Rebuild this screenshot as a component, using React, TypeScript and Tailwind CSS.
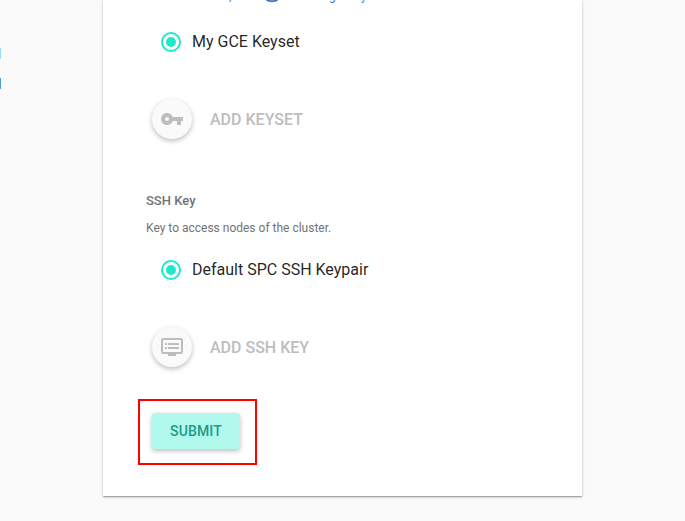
import { MdVpnKey, MdDvr } from "react-icons/md";
import type { ReactNode } from "react";

function Radio({ label }: { label: string }) {
  return (
    <label className="flex h-6 items-center gap-[11px] pl-[15px] text-[16px] text-black/87">
      <span className="flex size-5 items-center justify-center rounded-full border-2 border-[#1de9cb]">
        <span className="size-2.5 rounded-full bg-[#1de9cb]" />
      </span>
      <span>{label}</span>
    </label>
  );
}

function AddButton({ icon, label }: { icon: ReactNode; label: string }) {
  return (
    <div className="flex h-10 items-center gap-[18px] pl-1.5">
      <span className="flex size-10 items-center justify-center rounded-full bg-[#fafafa] text-[#bdbdbd] shadow-[0_2px_5px_0_rgba(0,0,0,0.26)]">
        {icon}
      </span>
      <span className="pt-px text-[16px] font-medium text-[#bdbdbd]">{label}</span>
    </div>
  );
}

export default function App() {
  return (
    <div className="flex h-[521px] w-[685px] overflow-hidden bg-[#fafafa] font-[Roboto,sans-serif]">
      <div className="flex w-[103px] shrink-0 flex-col gap-[19px] pt-12">
        <span className="h-[11px] w-px bg-[#a2d9fb]" />
        <span className="h-[11px] w-px bg-[#4ba0d8]" />
      </div>
      <main className="h-[496px] w-[479px] bg-white pl-[43px] shadow-[0_1px_3px_0_rgba(0,0,0,0.2),0_1px_1px_0_rgba(0,0,0,0.14),0_2px_1px_-1px_rgba(0,0,0,0.12)]">
        {/* Lower edge of the line that is scrolled out of view */}
        <div className="h-[30px]">
          <div className="flex h-[3px] items-end overflow-hidden pl-[83px] text-[12px] leading-[14px] text-[#3f78bd]">
            <span className="w-[37px] shrink-0">,</span>
            <svg className="h-[3px] w-3 shrink-0" viewBox="0 0 12 3" fill="none" stroke="currentColor">
              <path d="M.5-.5C2.5 1.8 9.500 1.800 11.500-.5" strokeWidth="2" />
            </svg>
            <span className="ml-[51px] w-8 shrink-0">g</span>
            <span>y</span>
          </div>
        </div>
        <Radio label="My GCE Keyset" />
        <div className="mt-[45px]">
          <AddButton icon={<MdVpnKey size={24} />} label="ADD KEYSET" />
        </div>
        <h2 className="mt-[52px] text-[13px] leading-5 font-medium text-[#737373]">SSH Key</h2>
        <p className="mt-[7px] text-[12px] leading-5 text-[#737373]">Key to access nodes of the cluster.</p>
        <div className="mt-5">
          <Radio label="Default SPC SSH Keypair" />
        </div>
        <div className="mt-[45px]">
          <AddButton icon={<MdDvr size={24} />} label="ADD SSH KEY" />
        </div>
        <div className="mt-8 -ml-2 flex h-[66px] w-[119px] items-center justify-center border-2 border-[#f00] pr-1 pb-0.5">
          <button className="h-9 w-[88px] rounded-[3px] bg-[#b2f9ed] pl-px text-[14px] font-medium tracking-[0.14px] text-[#1a9c88] shadow-[0_2px_5px_0_rgba(0,0,0,0.26)]">
            SUBMIT
          </button>
        </div>
      </main>
    </div>
  );
}
